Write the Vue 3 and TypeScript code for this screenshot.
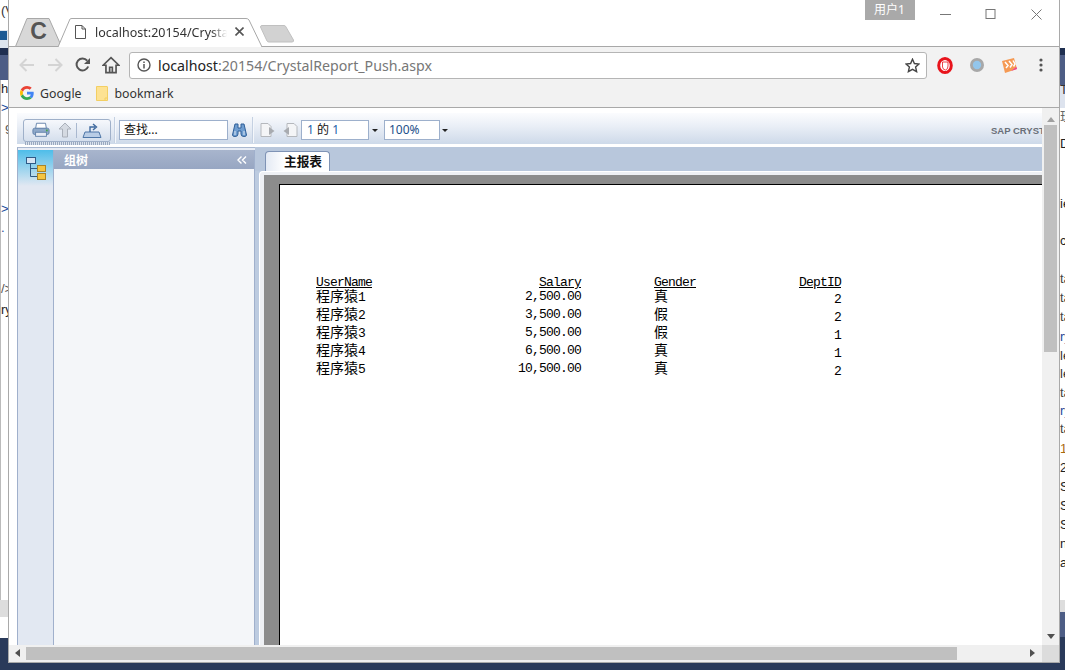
<template>
  <div class="desktop">
    <div class="side side-left">
      <span class="ide-icon"></span>
      <span
        v-for="s in leftSlivers"
        :key="s.y"
        class="sliver"
        :style="{ top: s.y + 'px', left: (s.x ?? 0) + 'px', color: s.color }"
      >{{ s.text }}</span>
    </div>

    <div class="window">
      <div class="tabstrip">
        <div class="tab tab-pinned">
          <svg class="tab-shape" width="47" height="29" viewBox="0 0 47 29">
            <path d="M0.5 28.5 L12 0.5 H34 L46.5 28.5 Z" fill="#d8d8d8" stroke="#a8a8a8" />
          </svg>
          <span class="pinned-letter">C</span>
        </div>
        <div class="tab tab-active">
          <svg class="tab-shape" width="204" height="29" viewBox="0 0 204 29">
            <path d="M0 29 L12 1 Q12.5 0.5 14 0.5 H188 Q190 0.5 191 2 L204 29" fill="#fff" stroke="#a8a8a8" />
          </svg>
          <svg class="doc-icon" width="11" height="14" viewBox="0 0 11 14">
            <path d="M0.5 0.5 H7 L10.5 4 V13.5 H0.5 Z M7 0.5 V4 H10.5" fill="#fff" stroke="#555" />
          </svg>
          <span class="tab-title">localhost:20154/Crysta</span>
          <svg class="tab-close" width="9" height="9" viewBox="0 0 9 9">
            <path d="M0.5 0.5 L8.5 8.5 M8.5 0.5 L0.5 8.5" stroke="#555" stroke-width="1.6" />
          </svg>
        </div>
        <svg class="new-tab" width="34" height="18" viewBox="0 0 34 18">
          <path d="M0.5 2 Q0.5 0.5 2 0.5 H24 Q25.5 0.5 26 2 L33.5 15 Q34 17 32 17 H9 Q7.5 17 7 16 Z" fill="#d2d2d2" stroke="#c0c0c0" />
        </svg>
        <div class="caption">
          <div class="profile">用户1</div>
          <button class="win-btn">
            <svg width="11" height="11" viewBox="0 0 11 11"><path d="M0 5.5 H11" stroke="#777" /></svg>
          </button>
          <button class="win-btn">
            <svg width="11" height="11" viewBox="0 0 11 11"><rect x="1" y="0.5" width="9" height="9" fill="none" stroke="#777" /></svg>
          </button>
          <button class="win-btn">
            <svg width="11" height="11" viewBox="0 0 11 11"><path d="M0.5 0.5 L10.5 10.5 M10.5 0.5 L0.5 10.5" stroke="#777" /></svg>
          </button>
        </div>
      </div>

      <div class="navbar">
        <span class="nav-btn">
          <svg width="16" height="14" viewBox="0 0 16 14"><path d="M15 7 H2 M7.5 1 L1.5 7 L7.5 13" fill="none" stroke="#d4d4d4" stroke-width="2" /></svg>
        </span>
        <span class="nav-btn">
          <svg width="16" height="14" viewBox="0 0 16 14"><path d="M1 7 H14 M8.5 1 L14.5 7 L8.5 13" fill="none" stroke="#d4d4d4" stroke-width="2" /></svg>
        </span>
        <span class="nav-btn">
          <svg width="16" height="16" viewBox="0 0 16 16">
            <path d="M13.2 9.5 A6 6 0 1 1 12.2 3.6" fill="none" stroke="#555" stroke-width="2" />
            <path d="M15 1 V7 H9 Z" fill="#555" />
          </svg>
        </span>
        <span class="nav-btn">
          <svg width="18" height="18" viewBox="0 0 16 16"><path d="M8 1.5 L15 8.2 H12.5 V14.8 H3.5 V8.2 H1 Z M6.8 14.8 V10 H9.2 V14.8" fill="none" stroke="#555" stroke-width="1.5" /></svg>
        </span>
        <div class="omnibox">
          <svg class="info-icon" width="14" height="14" viewBox="0 0 14 14">
            <circle cx="7" cy="7" r="6" fill="none" stroke="#555" stroke-width="1.4" />
            <path d="M7 6 V10.5 M7 3.4 V5" stroke="#555" stroke-width="1.5" />
          </svg>
          <span class="url"><span class="url-host">localhost</span>:20154/CrystalReport_Push.aspx</span>
          <svg class="star" width="15" height="15" viewBox="0 0 15 15">
            <path d="M7.5 1.2 L9.4 5.5 L14 6 L10.6 9 L11.6 13.6 L7.5 11.3 L3.4 13.6 L4.4 9 L1 6 L5.6 5.5 Z" fill="none" stroke="#444" stroke-width="1.4" />
          </svg>
        </div>
        <span class="ext-btn">
          <svg width="16" height="17" viewBox="0 0 16 17">
            <ellipse cx="8" cy="8.5" rx="6.3" ry="7" fill="#fff" stroke="#e8141c" stroke-width="3" />
            <path d="M5.5 5 V10 Q6 13 8.5 13 Q11 12.5 11 9 V5 Z" fill="#fff" stroke="#e8141c" stroke-width="0.8" />
          </svg>
        </span>
        <span class="ext-btn">
          <svg width="16" height="16" viewBox="0 0 16 16">
            <circle cx="8" cy="8" r="7" fill="#a8a8a8" />
            <circle cx="8" cy="8" r="4.2" fill="#93c6ec" />
          </svg>
        </span>
        <span class="ext-btn">
          <svg width="17" height="17" viewBox="0 0 17 17">
            <path d="M1 4 L13 1 L16 12 L4 16 Z" fill="#f59a54" />
            <path d="M4 5 L7 8.5 L5 11 M8 4 L11 7.5 L9 10.5 M12 3.5 L14 7 L12.5 9.5" fill="none" stroke="#fff" stroke-width="1.5" />
            <path d="M10 14 L16 12 L15.4 10 Z" fill="#ee3f9a" />
          </svg>
        </span>
        <span class="ext-btn">
          <svg width="4" height="14" viewBox="0 0 4 14" fill="#555">
            <circle cx="2" cy="2" r="1.6" /><circle cx="2" cy="7" r="1.6" /><circle cx="2" cy="12" r="1.6" />
          </svg>
        </span>
      </div>

      <div class="bookmarks">
        <svg class="bm-g" width="14" height="14" viewBox="0 0 48 48">
          <path fill="#EA4335" d="M24 9.5c3.54 0 6.71 1.22 9.21 3.6l6.85-6.85C35.9 2.38 30.47 0 24 0 14.62 0 6.51 5.38 2.56 13.22l7.98 6.19C12.43 13.72 17.74 9.5 24 9.5z" />
          <path fill="#4285F4" d="M46.98 24.55c0-1.57-.15-3.09-.38-4.55H24v9.02h12.94c-.58 2.96-2.26 5.48-4.78 7.18l7.73 6c4.51-4.18 7.09-10.36 7.09-17.65z" />
          <path fill="#FBBC05" d="M10.53 28.59c-.48-1.45-.76-2.99-.76-4.59s.27-3.14.76-4.59l-7.98-6.19C.92 16.46 0 20.12 0 24c0 3.88.92 7.54 2.56 10.78l7.97-6.19z" />
          <path fill="#34A853" d="M24 48c6.48 0 11.93-2.13 15.89-5.81l-7.73-6c-2.15 1.45-4.92 2.3-8.16 2.3-6.26 0-11.57-4.22-13.47-9.91l-7.98 6.19C6.51 42.62 14.62 48 24 48z" />
        </svg>
        <span class="bm-label">Google</span>
        <svg class="bm-folder" width="12" height="15" viewBox="0 0 12 15">
          <path d="M0.5 0.5 H11 Q11.5 0.5 11.5 1 V14.5 H0.5 Z" fill="#fde293" stroke="#f3cf63" />
          <path d="M9 14.5 V12 H11.5" fill="none" stroke="#f3cf63" />
        </svg>
        <span class="bm-label">bookmark</span>
      </div>

      <div class="page">
        <div class="page-row">
          <div class="viewer">
            <div class="cr-toolbar">
              <div class="cr-group">
                <svg width="18" height="16" viewBox="0 0 20 17">
                  <path d="M5 1 H15 L16 7 H4 Z" fill="#fff" stroke="#5f7fa8" />
                  <rect x="1" y="6.5" width="18" height="7" rx="2" fill="#8fa9c9" stroke="#5f7fa8" />
                  <rect x="4" y="11" width="12" height="4.5" fill="#e8edf5" stroke="#5f7fa8" />
                  <rect x="15.5" y="8" width="2" height="2" fill="#4aa54a" />
                </svg>
                <svg class="cr-up" width="14" height="16" viewBox="0 0 14 16">
                  <path d="M7 1 L13 7 H9.5 V15 H4.5 V7 H1 Z" fill="#d5dae2" stroke="#aab0ba" />
                </svg>
                <span class="cr-divider"></span>
                <svg width="20" height="17" viewBox="0 0 20 17">
                  <path d="M1 15.5 L3 10 H17 L19 15.5 Z" fill="#b9cde6" stroke="#4f77a8" />
                  <path d="M8 10 V5 H13 M11 2 L14.5 5 L11 8" fill="none" stroke="#3f6a9f" stroke-width="1.4" />
                </svg>
              </div>
              <span class="cr-sep"></span>
              <div class="cr-input cr-search">查找...</div>
              <svg class="cr-binoculars" width="15" height="14" viewBox="0 0 15 14">
                <path d="M3 1 H6 V5 H9 V1 H12 L14.5 12 Q14.5 13.5 12 13.5 Q9 13.5 9 11 V8 H6 V11 Q6 13.5 3 13.5 Q0.5 13.5 0.5 12 Z" fill="#6f9dd0" stroke="#2f5f98" />
                <path d="M3 8 V12 M12 8 V12" stroke="#dce8f5" />
              </svg>
              <span class="cr-sep cr-sep-b"></span>
              <svg width="16" height="16" viewBox="0 0 16 16">
                <path d="M1 1.5 H8 L11 4.5 V14.5 H1 Z" fill="#f4f5f7" stroke="#b5b8bd" />
                <path d="M9 5 L14.5 9 L9 13 Z" fill="#a8abb0" />
              </svg>
              <svg class="cr-prev" width="16" height="16" viewBox="0 0 16 16">
                <path d="M5 1.5 H12 L15 4.5 V14.5 H5 Z" fill="#f4f5f7" stroke="#b5b8bd" />
                <path d="M7 5 L1.5 9 L7 13 Z" fill="#a8abb0" />
              </svg>
              <div class="cr-input cr-pages"><span class="blue">1</span> 的 <span class="blue">1</span></div>
              <span class="cr-caret"></span>
              <div class="cr-input cr-zoom">100%</div>
              <span class="cr-caret"></span>
              <span class="cr-brand">SAP CRYSTAL REPORTS</span>
            </div>

            <div class="cr-main">
              <aside class="cr-side">
                <div class="cr-strip">
                  <div class="cr-strip-head">
                    <svg width="20" height="23" viewBox="0 0 20 23">
                      <rect x="0.5" y="0.5" width="9" height="6" fill="#d5e4f4" stroke="#2f5a86" />
                      <path d="M4.5 6.5 V19.5 H11 M4.5 11.5 H11" fill="none" stroke="#2f5a86" />
                      <rect x="11.5" y="8.5" width="8" height="6" fill="#f5c542" stroke="#a8842a" />
                      <rect x="11.5" y="16.5" width="8" height="6" fill="#f5c542" stroke="#a8842a" />
                    </svg>
                  </div>
                </div>
                <div class="cr-tree">
                  <div class="cr-tree-head">
                    <span>组树</span>
                    <svg width="10" height="8" viewBox="0 0 10 8"><path d="M4.5 0.5 L1 4 L4.5 7.5 M9 0.5 L5.5 4 L9 7.5" fill="none" stroke="#fff" stroke-width="1.4" /></svg>
                  </div>
                </div>
              </aside>

              <div class="cr-content">
                <div class="cr-tabs">
                  <div class="cr-tab">主报表</div>
                </div>
                <div class="cr-frame">
                  <div class="cr-sheet">
                    <div class="report">
                      <div class="report-grid">
                        <div class="cell head">UserName</div>
                        <div class="cell head num">Salary</div>
                        <div class="cell head gender">Gender</div>
                        <div class="cell head num">DeptID</div>
                        <template v-for="r in rows" :key="r.id">
                          <div class="cell cjk">程序猿<span class="mono">{{ r.id }}</span></div>
                          <div class="cell num">{{ r.salary }}</div>
                          <div class="cell cjk gender">{{ r.gender }}</div>
                          <div class="cell num dept">{{ r.dept }}</div>
                        </template>
                      </div>
                    </div>
                  </div>
                </div>
              </div>
            </div>
          </div>

          <div class="vscroll">
            <span class="arrow arrow-up"></span>
            <div class="vthumb"></div>
            <span class="arrow arrow-down"></span>
          </div>
        </div>

        <div class="hscroll">
          <span class="arrow arrow-left"></span>
          <div class="hthumb"></div>
          <span class="arrow arrow-right"></span>
          <span class="corner"></span>
        </div>
      </div>
    </div>

    <div class="side side-right">
      <span
        v-for="s in rightSlivers"
        :key="s.y"
        class="sliver"
        :style="{ top: s.y + 'px', left: '0px', color: s.color }"
      >{{ s.text }}</span>
    </div>
  </div>
</template>

<script setup lang="ts">
interface Row {
  id: number
  salary: string
  gender: string
  dept: number
}

interface Sliver {
  y: number
  x?: number
  text: string
  color: string
}

const rows: Row[] = [
  { id: 1, salary: '2,500.00', gender: '真', dept: 2 },
  { id: 2, salary: '3,500.00', gender: '假', dept: 2 },
  { id: 3, salary: '5,500.00', gender: '假', dept: 1 },
  { id: 4, salary: '6,500.00', gender: '真', dept: 1 },
  { id: 5, salary: '10,500.00', gender: '真', dept: 2 }
]

// bits of the IDE window behind the browser
const leftSlivers: Sliver[] = [
  { y: 3, x: 1, text: '(V', color: '#333' },
  { y: 81, x: 1, text: 'h', color: '#222' },
  { y: 100, x: 1, text: '>', color: '#1a4a9a' },
  { y: 122, x: 5, text: '9', color: '#555' },
  { y: 201, x: 1, text: '>', color: '#1a4a9a' },
  { y: 220, x: 1, text: '.', color: '#1a4a9a' },
  { y: 281, x: 1, text: '/>', color: '#555' },
  { y: 302, x: 1, text: 'ry', color: '#222' }
]

const rightSlivers: Sliver[] = [
  { y: 82, text: 'To', color: '#333' },
  { y: 109, text: '理', color: '#666' },
  { y: 136, text: 'De', color: '#222' },
  { y: 196, text: 'ie', color: '#222' },
  { y: 233, text: 'c', color: '#222' },
  { y: 271, text: 'ta', color: '#444' },
  { y: 290, text: 'ta', color: '#444' },
  { y: 309, text: 'ta', color: '#444' },
  { y: 329, text: 'ry', color: '#1a4a9a' },
  { y: 348, text: 'le', color: '#333' },
  { y: 366, text: 'le', color: '#333' },
  { y: 385, text: 'ta', color: '#444' },
  { y: 403, text: 'ry', color: '#1a4a9a' },
  { y: 421, text: 'ta', color: '#444' },
  { y: 441, text: '1', color: '#a86a10' },
  { y: 460, text: '2', color: '#222' },
  { y: 479, text: 'S', color: '#222' },
  { y: 498, text: 'S', color: '#222' },
  { y: 517, text: 'S', color: '#222' },
  { y: 536, text: 'n', color: '#222' },
  { y: 555, text: 'a', color: '#222' }
]
</script>

<style>
html,
body {
  margin: 0;
  overflow: hidden;
}
</style>

<style scoped>
.desktop {
  display: flex;
  width: 1065px;
  height: 670px;
  overflow: hidden;
  background: #2a3a5a;
  font-family: "Noto Sans", "Noto Sans CJK SC", sans-serif;
}

.side {
  position: relative;
  flex: none;
  height: 670px;
  overflow: hidden;
  font: 13px "Liberation Sans", "Noto Sans CJK SC", sans-serif;
}

.side-left {
  width: 8px;
  background: linear-gradient(
    #fff 0 30px,
    #dde5ee 30px 48px,
    #1f2f50 48px 55px,
    #4d5d85 55px 80px,
    #fff 80px 600px,
    #ddd 600px 617px,
    #fff 617px 638px,
    #2a3a5a 638px
  );
}

.side-left::before {
  content: "";
  position: absolute;
  left: 0;
  top: 80px;
  width: 1px;
  height: 520px;
  background: #bbb;
}

.ide-icon {
  position: absolute;
  left: 0;
  top: 31px;
  width: 7px;
  height: 9px;
  background: #1c5a94;
}

.side-right {
  width: 5px;
  background: linear-gradient(
    #fff 0 48px,
    #1f2f50 48px 55px,
    #4d5d85 55px 85px,
    #dde3ee 85px 108px,
    #fff 108px 600px,
    #ddd 600px 612px,
    #4d5d85 612px 637px,
    #2a3a5a 637px
  );
}

.sliver {
  position: absolute;
  white-space: nowrap;
  line-height: 15px;
}

.window {
  flex: none;
  box-sizing: border-box;
  width: 1052px;
  height: 663px;
  background: #fff;
  border: 1px solid #a9a9a9;
  border-top: 0;
  display: flex;
  flex-direction: column;
}

/* tab strip */
.tabstrip {
  flex: none;
  display: flex;
  align-items: flex-end;
  box-sizing: border-box;
  height: 47px;
  padding-left: 6px;
  border-bottom: 1px solid #a8a8a8;
}

.tab {
  position: relative;
  height: 29px;
  margin-bottom: -1px;
  display: flex;
  align-items: center;
}

.tab-shape {
  position: absolute;
  left: 0;
  top: 0;
}

.tab-pinned {
  width: 47px;
  justify-content: center;
}

.pinned-letter {
  position: relative;
  top: -1px;
  font: bold 23px "Liberation Sans", sans-serif;
  color: #555;
}

.tab-active {
  width: 204px;
  margin-left: -4px;
}

.doc-icon {
  position: relative;
  margin-left: 17px;
  margin-top: -2px;
}

.tab-title {
  position: relative;
  margin-left: 9px;
  width: 132px;
  overflow: hidden;
  white-space: nowrap;
  font-size: 12.5px;
  color: #333;
  -webkit-mask-image: linear-gradient(90deg, #000 88%, transparent);
  mask-image: linear-gradient(90deg, #000 88%, transparent);
}

.tab-close {
  position: relative;
  margin-left: 8px;
  margin-top: -2px;
}

.new-tab {
  margin-left: -2px;
  margin-bottom: 3px;
}

.caption {
  margin-left: auto;
  align-self: flex-start;
  display: flex;
  align-items: flex-start;
}

.profile {
  width: 50px;
  height: 20px;
  margin-right: 8px;
  background: #a9a9a9;
  color: #fff;
  font-size: 12px;
  line-height: 20px;
  text-align: center;
}

.win-btn {
  width: 45.5px;
  height: 28px;
  padding: 0;
  border: 0;
  background: none;
  display: flex;
  align-items: center;
  justify-content: center;
}

/* address bar */
.navbar {
  flex: none;
  height: 36px;
  display: flex;
  align-items: center;
  padding-left: 4px;
  background: #f2f2f2;
}

.nav-btn {
  width: 28px;
  display: flex;
  justify-content: center;
}

.omnibox {
  box-sizing: border-box;
  width: 798px;
  height: 27px;
  margin: 0 2px 0 4px;
  display: flex;
  align-items: center;
  background: #fff;
  border: 1px solid #b5b5b5;
  border-radius: 3px;
}

.info-icon {
  margin-left: 7px;
}

.url {
  margin-left: 7px;
  font-size: 14.2px;
  color: #777;
}

.url-host {
  color: #222;
}

.star {
  margin-left: auto;
  margin-right: 6px;
}

.ext-btn {
  width: 32px;
  display: flex;
  justify-content: center;
}

.bookmarks {
  flex: none;
  box-sizing: border-box;
  height: 25px;
  display: flex;
  align-items: center;
  padding: 0 0 4px 11px;
  background: #f2f2f2;
  border-bottom: 1px solid #a9a9a9;
  font-size: 12.3px;
  color: #333;
}

.bm-label {
  margin-left: 6px;
}

.bm-folder {
  margin-left: 14px;
}

.bm-label:last-child {
  margin-left: 7px;
}

/* page */
.page {
  flex: 1;
  min-height: 0;
  display: flex;
  flex-direction: column;
}

.page-row {
  flex: 1;
  min-height: 0;
  display: flex;
}

.viewer {
  flex: 1;
  min-width: 0;
  margin: 5px 0 0 8px;
  display: flex;
  flex-direction: column;
  overflow: hidden;
}

/* crystal toolbar */
.cr-toolbar {
  flex: none;
  box-sizing: border-box;
  height: 34px;
  display: flex;
  align-items: center;
  padding: 0 0 0 6px;
  background: linear-gradient(#fbfcfe, #e9eef6 40%, #cdd9e9 92%, #fff 92%);
  overflow: hidden;
  white-space: nowrap;
}

.cr-toolbar > * {
  flex: none;
}

.cr-group {
  position: relative;
  box-sizing: border-box;
  width: 88px;
  height: 23px;
  display: flex;
  align-items: center;
  padding-left: 8px;
  background: linear-gradient(#f6f8fc, #d5dfed);
  border: 1px solid #9fb0c9;
  border-radius: 3px;
}

.cr-group::after {
  content: "";
  position: absolute;
  left: 1px;
  right: 0;
  top: 22px;
  height: 3px;
  background: repeating-linear-gradient(90deg, #9aa9bf 0 1px, #dbe3ee 1px 2px);
}

.cr-up {
  margin-left: 8px;
}

.cr-divider {
  width: 1px;
  height: 15px;
  margin: 0 5px 0 4px;
  background: #a9b8cf;
}

.cr-sep {
  width: 1px;
  height: 26px;
  margin: 0 3px 0 4px;
  background: #f4f7fb;
  box-shadow: -1px 0 #c5d1e2;
}

.cr-input {
  box-sizing: border-box;
  height: 20px;
  padding-left: 4px;
  background: #fff;
  border: 1px solid #9db0cc;
  font-size: 12px;
  line-height: 18px;
  color: #111;
}

.cr-search {
  width: 109px;
}

.cr-binoculars {
  margin-left: 4px;
}

.cr-sep-b {
  margin: 0 6px 0 6px;
}

.cr-prev {
  margin-left: 6px;
}

.cr-pages {
  width: 68px;
  margin-left: 3px;
  padding-left: 5px;
}

.blue {
  color: #1d5fa8;
}

.cr-caret {
  width: 0;
  height: 0;
  margin: 0 6px 0 3px;
  border: 3px solid transparent;
  border-top: 3px solid #222;
  border-bottom: 0;
}

.cr-zoom {
  width: 56px;
  margin-right: -1px;
  color: #1d4f8a;
}

.cr-brand {
  margin-left: 537px;
  font: bold 9.5px "Liberation Sans", sans-serif;
  color: #6a6f78;
}

/* crystal body */
.cr-main {
  flex: 1;
  min-height: 0;
  display: flex;
}

.cr-side {
  flex: none;
  box-sizing: border-box;
  width: 238px;
  display: flex;
  padding-top: 2px;
  background: #e7ecf5;
  border-top: 1px solid #a9b8d0;
  border-left: 1px solid #a0b0cc;
}

.cr-strip {
  box-sizing: border-box;
  flex: none;
  width: 36px;
  background: #e2e8f2;
  border-right: 1px solid #a0b0cc;
}

.cr-strip-head {
  height: 36px;
  display: flex;
  align-items: center;
  justify-content: center;
  background: linear-gradient(#4ebde9, #e2e8f2);
}

.cr-tree {
  flex: 1;
  background: #f4f6f9;
  border-right: 1px solid #a0b0cc;
}

.cr-tree-head {
  box-sizing: border-box;
  height: 19px;
  display: flex;
  align-items: center;
  justify-content: space-between;
  padding: 0 7px 0 10px;
  background: linear-gradient(#a8b5cd, #97a6c2);
  color: #fff;
  font-size: 12px;
  font-weight: 700;
}

.cr-content {
  flex: 1;
  min-width: 0;
  display: flex;
  flex-direction: column;
  background: #bccbe0;
}

.cr-tabs {
  flex: none;
  height: 24px;
  display: flex;
  align-items: flex-end;
  padding-left: 10px;
  background: #b8c7dc;
}

.cr-tab {
  box-sizing: border-box;
  width: 65px;
  height: 20px;
  padding-left: 18px;
  background: linear-gradient(90deg, #e4eaf4, #fff 30%);
  border: 1px solid #7f93b5;
  border-bottom: 0;
  border-radius: 4px 4px 0 0;
  color: #111;
  font-size: 12.7px;
  font-weight: 700;
  line-height: 19px;
}

.cr-frame {
  flex: 1;
  min-height: 0;
  margin-left: 4px;
  padding: 3px 0 0 4px;
  background: #eef0f4;
  border-top: 1px solid #fff;
  border-left: 1px solid #fff;
  border-top-left-radius: 4px;
  display: flex;
}

.cr-sheet {
  flex: 1;
  min-width: 0;
  display: flex;
  padding: 9px 0 0 15px;
  background: #8c8c8c;
}

.report {
  flex: 1;
  box-sizing: border-box;
  padding: 91px 0 0 36px;
  background: #fff;
  border-top: 1px solid #000;
  border-left: 1px solid #000;
}

.report-grid {
  display: grid;
  grid-template-columns: 165px 100px 113px 147px;
  grid-template-rows: 11px;
  grid-auto-rows: 18px;
  font: 13px/20px "Liberation Mono", monospace;
  letter-spacing: -0.8px;
  color: #000;
}

.cell {
  white-space: nowrap;
}

.head {
  line-height: 14px;
  text-decoration: underline;
}

.num {
  text-align: right;
}

.gender {
  padding-left: 73px;
}

.dept {
  padding-top: 3px;
}

.cjk {
  font: 14px/16px "Noto Sans CJK SC", sans-serif;
  letter-spacing: 0;
}

.mono {
  font: 13px/16px "Liberation Mono", monospace;
  letter-spacing: -0.8px;
}

/* scrollbars */
.vscroll {
  flex: none;
  width: 17px;
  box-sizing: border-box;
  display: flex;
  flex-direction: column;
  align-items: center;
  background: #f0f0f0;
  position: relative;
}

.vthumb {
  width: 13px;
  height: 227px;
  margin-top: 17px;
  background: #c0c0c0;
}

.arrow {
  position: absolute;
  width: 0;
  height: 0;
  border: 4px solid transparent;
}

.arrow-up {
  top: 9px;
  left: 4.5px;
  border-top: 0;
  border-bottom: 5px solid #a0a0a0;
}

.arrow-down {
  bottom: 6px;
  left: 4.5px;
  border-bottom: 0;
  border-top: 5px solid #505050;
}

.hscroll {
  flex: none;
  position: relative;
  height: 17px;
  box-sizing: border-box;
  padding: 2px 0 2px 17px;
  background: #f0f0f0;
}

.hthumb {
  width: 931px;
  height: 13px;
  background: #c0c0c0;
}

.arrow-left {
  left: 6px;
  top: 4px;
  border-left: 0;
  border-right: 5px solid #505050;
}

.arrow-right {
  right: 24px;
  top: 4px;
  border-right: 0;
  border-left: 5px solid #505050;
}

.corner {
  position: absolute;
  right: 0;
  top: 0;
  width: 17px;
  height: 17px;
  background: #dcdcdc;
}
</style>
